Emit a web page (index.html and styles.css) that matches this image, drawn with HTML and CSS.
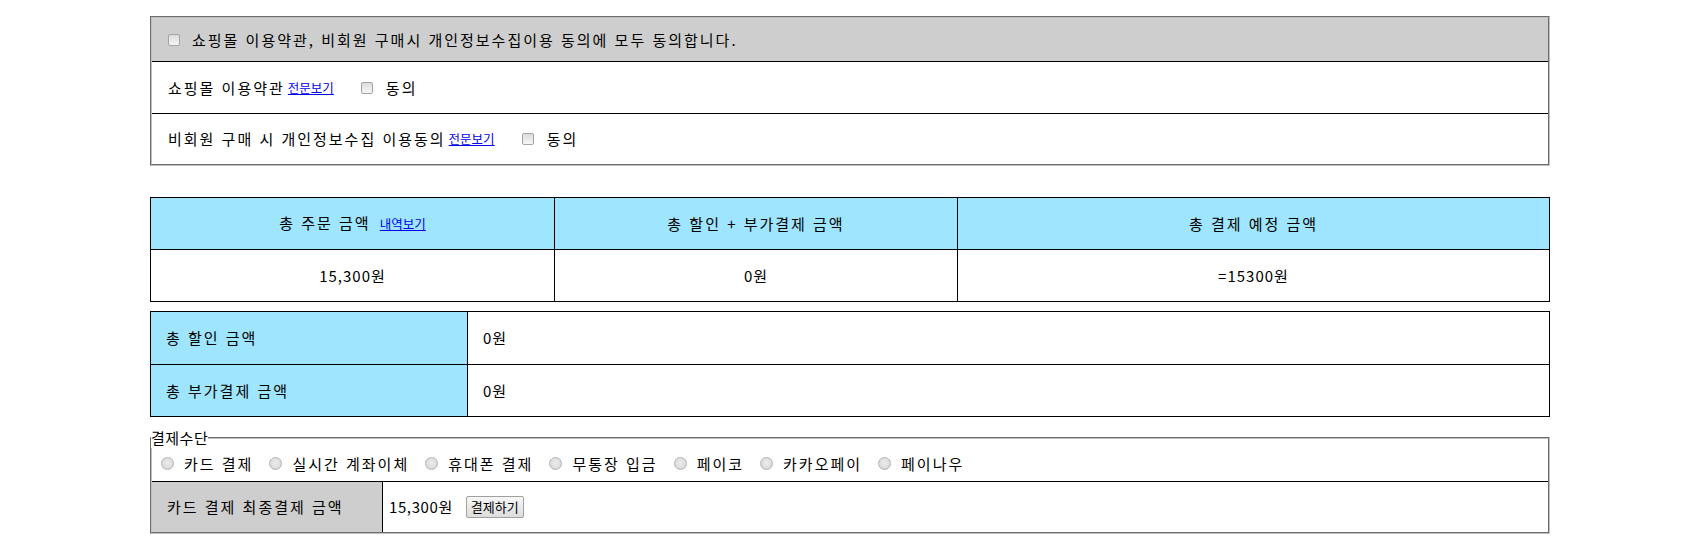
FILE: index.html
```html
<!DOCTYPE html>
<html lang="ko">
<head>
<meta charset="utf-8">
<title>주문 결제</title>
<link rel="stylesheet" href="styles.css">
</head>
<body>
<div class="page">
  <div class="agree-box">
    <div class="agree-row agree-all">
      <input type="checkbox" class="chk">
      <span class="all-text">쇼핑몰 이용약관, 비회원 구매시 개인정보수집이용 동의에 모두 동의합니다.</span>
    </div>
    <div class="agree-row">
      <span>쇼핑몰 이용약관</span>
      <a href="#" class="small-link">전문보기</a>
      <input type="checkbox" class="chk chk-agree">
      <span>동의</span>
    </div>
    <div class="agree-row">
      <span>비회원 구매 시 개인정보수집 이용동의</span>
      <a href="#" class="small-link">전문보기</a>
      <input type="checkbox" class="chk chk-agree">
      <span>동의</span>
    </div>
  </div>

  <table class="summary">
    <colgroup><col class="c1"><col class="c2"><col></colgroup>
    <tr class="head">
      <th>총 주문 금액 <a href="#" class="small-link">내역보기</a></th>
      <th>총 할인 + 부가결제 금액</th>
      <th>총 결제 예정 금액</th>
    </tr>
    <tr>
      <td class="num">15,300원</td>
      <td class="num">0원</td>
      <td class="num">=15300원</td>
    </tr>
  </table>

  <table class="detail">
    <colgroup><col class="d1"><col></colgroup>
    <tr class="first">
      <th>총 할인 금액</th>
      <td class="num">0원</td>
    </tr>
    <tr>
      <th>총 부가결제 금액</th>
      <td class="num">0원</td>
    </tr>
  </table>

  <fieldset class="pay">
    <legend>결제수단</legend>
    <div class="methods">
      <label class="method"><input type="radio" name="pay" class="rad"><span>카드 결제</span></label>
      <label class="method"><input type="radio" name="pay" class="rad"><span>실시간 계좌이체</span></label>
      <label class="method"><input type="radio" name="pay" class="rad"><span>휴대폰 결제</span></label>
      <label class="method"><input type="radio" name="pay" class="rad"><span>무통장 입금</span></label>
      <label class="method"><input type="radio" name="pay" class="rad"><span>페이코</span></label>
      <label class="method"><input type="radio" name="pay" class="rad"><span>카카오페이</span></label>
      <label class="method"><input type="radio" name="pay" class="rad"><span>페이나우</span></label>
    </div>
    <div class="pay-row">
      <div class="pay-label">카드 결제 최종결제 금액</div>
      <div class="pay-value">
        <span class="num num-pay">15,300원</span>
        <button type="button" class="pay-btn">결제하기</button>
      </div>
    </div>
  </fieldset>
</div>
</body>
</html>
```

FILE: styles.css
```css
body {
  margin: 8px;
  font-family: "Noto Sans CJK KR", "Noto Sans", sans-serif;
  font-size: 15px;
  letter-spacing: 2px;
  line-height: 20px;
  color: #000;
  background: #fff;
}

.page {
  width: 1400px;
  margin-left: 142px;
  padding-top: 8px;
}

.num {
  letter-spacing: 1px;
}
.num-pay {
  letter-spacing: 0.6px;
}

/* agreement box */
.agree-box {
  border: 2px groove #c0c0c0;
}
.agree-row {
  display: flex;
  align-items: center;
  height: 50px;
  padding: 0 15px 0 16px;
  border-top: 1px solid #000;
}
.agree-row.agree-all {
  height: 43px;
  border-top: none;
  background: #cecece;
}
.agree-row.agree-all .chk {
  margin: 0 12px 0 0;
}
.agree-row:nth-child(2) {
  height: 51px;
}

.small-link {
  font-size: 12.5px;
  letter-spacing: 0;
  color: #0000ee;
  text-decoration: underline;
  margin-left: 3px;
}

.chk {
  -webkit-appearance: none;
  appearance: none;
  width: 12px;
  height: 12px;
  margin: 0;
  border: 1px solid #a4a4a4;
  border-radius: 2px;
  background: linear-gradient(#dcdcdc, #f6f6f6);
  box-sizing: border-box;
}
.chk-agree {
  margin: 0 13px 0 27px;
}

/* summary table */
.summary {
  width: 1400px;
  margin-top: 31px;
  border-collapse: collapse;
  border: 1px solid #000;
}
.summary col.c1 { width: 404px; }
.summary col.c2 { width: 403px; }
.summary th,
.summary td {
  border: 1px solid #000;
  height: 51px;
  padding: 0;
  text-align: center;
  font-weight: normal;
}
.summary tr.head th {
  background: #9fe5fd;
}

/* detail table */
.detail {
  width: 1400px;
  margin-top: 9px;
  border-collapse: collapse;
  border: 1px solid #000;
}
.detail col.d1 { width: 317px; }
.detail th,
.detail td {
  border: 1px solid #000;
  height: 51px;
  padding: 0 15px;
  text-align: left;
  font-weight: normal;
}
.detail tr.first th,
.detail tr.first td {
  height: 52px;
}
.detail th {
  background: #9fe5fd;
}

/* payment fieldset */
.pay {
  margin: 11px 0 0;
  padding: 0;
  border: 2px groove #c0c0c0;
  min-width: 0;
}
.pay legend {
  padding: 0;
  margin-left: -1px;
  line-height: 20px;
  letter-spacing: 0.5px;
}
.methods {
  display: flex;
  align-items: center;
  height: 31px;
  padding: 0 0 2px 9px;
}
.method {
  display: flex;
  align-items: center;
  margin-right: 16px;
}
.rad {
  -webkit-appearance: none;
  appearance: none;
  width: 13px;
  height: 13px;
  margin: 0 10px 0 0;
  border: 1px solid #b4b4b4;
  border-radius: 50%;
  background: radial-gradient(circle at 50% 45%, #ececec 0, #e0e0e0 50%, #cfcfcf 100%);
  box-sizing: border-box;
}
.pay-row {
  display: flex;
  border-top: 1px solid #000;
  height: 50px;
}
.pay-label {
  width: 215px;
  padding-left: 15px;
  background: #cecece;
  border-right: 1px solid #000;
  display: flex;
  align-items: center;
}
.pay-value {
  display: flex;
  align-items: center;
  padding-left: 6px;
}
.pay-btn {
  margin-left: 13px;
  height: 22px;
  padding: 0 4px;
  font-family: "Noto Sans CJK KR", sans-serif;
  font-size: 13px;
  letter-spacing: 0;
  line-height: 18px;
  color: #000;
  border: 1px solid #a0a0a0;
  border-radius: 2px;
  background: linear-gradient(#f7f7f7, #dddddd);
}
```
